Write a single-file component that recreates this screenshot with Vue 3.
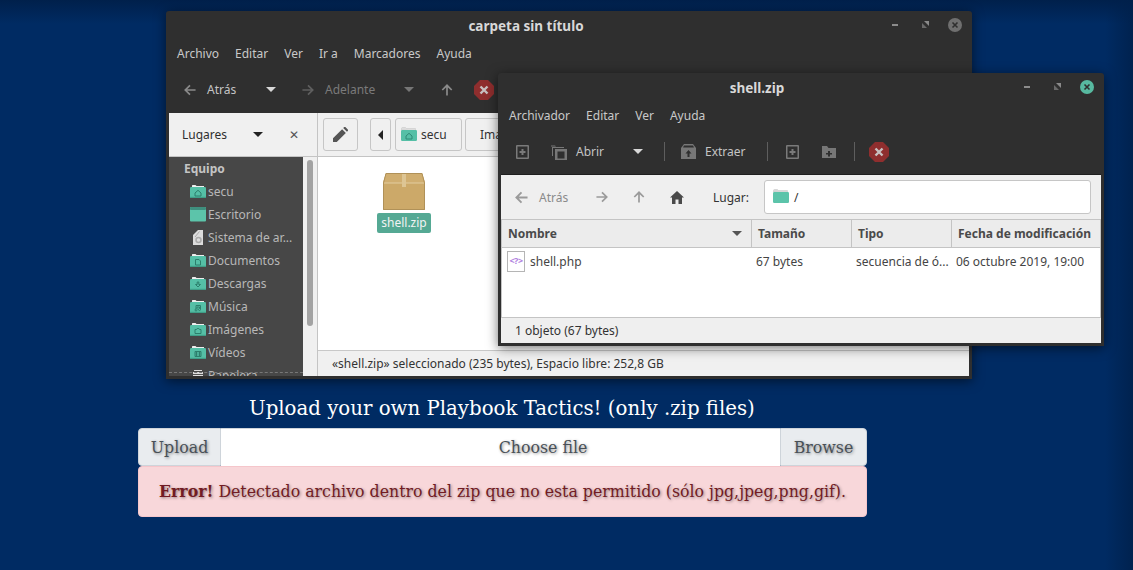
<script setup>
const places = [
  { name: 'secu', glyph: 'M5 9 8 6.300 11 9v3H5z', kind: 'folder' },
  { name: 'Escritorio', kind: 'desk' },
  { name: 'Sistema de ar...', kind: 'disk' },
  { name: 'Documentos', glyph: 'M5.500 6.500h3.500l1.500 1.500v4h-5z', kind: 'folder' },
  { name: 'Descargas', glyph: 'M7.200 6h1.600v2.500h1.700L8 11 5.500 8.500h1.700z', kind: 'folder' },
  { name: 'Música', glyph: 'M6 6.500h4.500v4a1 1 0 1 1-1-1V8H7v3a1 1 0 1 1-1-1z', kind: 'folder' },
  { name: 'Imágenes', glyph: 'M5 7.500h1.500l.7-1h1.600l.7 1H11v4H5z', kind: 'folder' },
  { name: 'Vídeos', glyph: 'M5 6.500h6v5H5zM6 7.500v1h1v-1zm3 0v1h1v-1zm-3 2v1h1v-1zm3 0v1h1v-1z', kind: 'folder' },
  { name: 'Papelera', kind: 'trash' },
]
const menu1 = ['Archivo', 'Editar', 'Ver', 'Ir a', 'Marcadores', 'Ayuda']
const menu2 = ['Archivador', 'Editar', 'Ver', 'Ayuda']
const columns = [
  { name: 'Nombre', width: 250, sort: true },
  { name: 'Tamaño', width: 100 },
  { name: 'Tipo', width: 100 },
  { name: 'Fecha de modificación', width: 148 },
]
</script>

<template>
  <div class="desktop">
    <svg class="defs" width="0" height="0" aria-hidden="true">
      <defs>
        <symbol id="left" viewBox="0 0 14 14"><path d="M7 1.500 1.500 7 7 12.500M1.800 7H13.500" fill="none" stroke="currentColor" stroke-width="2"/></symbol>
        <symbol id="right" viewBox="0 0 14 14"><path d="M7 1.500 12.500 7 7 12.500M12.200 7H.5" fill="none" stroke="currentColor" stroke-width="2"/></symbol>
        <symbol id="up" viewBox="0 0 14 14"><path d="M1.500 7 7 1.500 12.500 7M7 1.800V13.500" fill="none" stroke="currentColor" stroke-width="2"/></symbol>
        <symbol id="stop" viewBox="0 0 20 20"><path d="M6 0h8l6 6v8l-6 6H6l-6-6V6z" fill="#8f2e2e"/><path d="m6.500 6.500 7 7m0-7-7 7" stroke="#c8c0c0" stroke-width="2.400"/></symbol>
        <symbol id="close" viewBox="0 0 14 14"><circle cx="7" cy="7" r="7" fill="currentColor"/><path d="m4.500 4.500 5 5m0-5-5 5" stroke="#2f2f2f" stroke-width="1.600"/></symbol>
        <symbol id="max" viewBox="0 0 7 7"><path d="M2 0h5v5z" fill="#8a8a8a"/><path d="M0 2v5h5z" fill="#6a6a6a"/></symbol>
        <symbol id="addfile" viewBox="0 0 13 14"><path fill-rule="evenodd" d="M1 0h11a1 1 0 0 1 1 1v12a1 1 0 0 1-1 1H1a1 1 0 0 1-1-1V1a1 1 0 0 1 1-1zm.500 1.500v11h10v-11zM5.500 4h2v2h2v2h-2v2h-2V8h-2V6h2z" fill="#7a7a7a"/></symbol>
        <symbol id="addfolder" viewBox="0 0 14 14"><path fill-rule="evenodd" d="M0 1h5l1.500 2H14v10H0zM6 6v2H4v1.500h2v2h2v-2h2V8H8V6z" fill="#777"/></symbol>
        <symbol id="open" viewBox="0 0 16 16"><path d="M1 3h12v1H2v8H1zM0 1.500h4l1 1H0z" fill="#777"/><path fill-rule="evenodd" d="M4 5h12v11H4zm2.500 2.500v7h7v-7z" fill="#777"/></symbol>
        <symbol id="extract" viewBox="0 0 15 15"><path fill-rule="evenodd" d="M3 0h9l3 4v11H0V4zm0 1.500L2 3.500h11l-1-2zM7.500 6 4.500 9.500h2V13h2V9.500h2z" fill="#777"/></symbol>
      </defs>
    </svg>

    <section class="window back">
      <header class="title">carpeta sin título
        <div class="controls">
          <i class="min"></i>
          <svg class="max"><use href="#max"/></svg>
          <svg class="close idle"><use href="#close"/></svg>
        </div>
      </header>
      <nav class="menu"><span v-for="m in menu1" :key="m">{{ m }}</span></nav>
      <div class="tools tools1">
        <svg class="ic a1"><use href="#left"/></svg>
        <span class="t-atras">Atrás</span>
        <i class="caret c1"></i>
        <svg class="ic dim a2"><use href="#right"/></svg>
        <span class="dimtxt t-adel">Adelante</span>
        <i class="caret dimcaret c2"></i>
        <svg class="ic a3"><use href="#up"/></svg>
        <svg class="stop s1"><use href="#stop"/></svg>
      </div>
      <div class="fm">
        <aside class="side">
          <div class="lug">
            <span>Lugares</span>
            <i class="caret blk"></i>
            <span class="x">✕</span>
          </div>
          <div class="side-body">
            <div class="list">
              <div class="eq">Equipo</div>
              <div class="pl" v-for="p in places" :key="p.name">
                <svg class="pic" viewBox="0 0 16 16">
                  <template v-if="p.kind === 'folder'">
                    <path d="M2 3V1.500l.5-.5h3l1 1h7.500v1z" fill="#eee"/>
                    <rect x="0" y="3" width="16" height="11" rx="1.200" fill="#55bfa6"/>
                    <rect x="0" y="12.800" width="16" height="1.200" fill="#3f9e88"/>
                    <path :d="p.glyph" fill="none" stroke="#2c7f6c" stroke-width="1"/>
                  </template>
                  <template v-else-if="p.kind === 'desk'">
                    <rect x="0" y="0" width="16" height="14.500" rx="1" fill="#5cc4aa"/>
                    <rect x="0" y="0" width="16" height="3" rx="1" fill="#3f8f7e"/>
                  </template>
                  <template v-else-if="p.kind === 'disk'">
                    <path d="M8 0h5v15H3V5z" fill="#dcdcdc"/>
                    <circle cx="8.500" cy="10" r="2.500" fill="none" stroke="#aaa" stroke-width="1.500"/>
                    <path d="M5 7 9.500 1.500" stroke="#aaa"/>
                  </template>
                  <template v-else>
                    <path d="M4 2h8v1H4zM3 4h10v8H3z" fill="#ddd"/>
                    <path d="M3 6h10v1H3z" fill="#555"/>
                  </template>
                </svg>
                <span>{{ p.name }}</span>
              </div>
            </div>
            <i class="dash"></i>
            <div class="track"><b></b></div>
          </div>
        </aside>
        <main class="pane">
          <div class="pathbar">
            <button class="pb edit">
              <svg viewBox="0 0 14 14" width="15" height="15"><path d="M0 14v-3.500L8.500 2 12 5.500 3.500 14zM9.500 1 11 -.5 14.500 3 13 4.500z" fill="#555"/></svg>
            </button>
            <button class="pb back-btn"><i class="lt"></i></button>
            <button class="pb crumb">
              <svg class="pic" viewBox="0 0 16 16"><path d="M.5 3V1.500a1 1 0 0 1 1-1h3l1 1h9V4z" fill="#ddd" stroke="#bbb" stroke-width=".4"/><rect x="0" y="3" width="16" height="11" rx="1.200" fill="#55bfa6"/><path d="M5 9 8 6.300 11 9v3H5z" fill="none" stroke="#2f8a76"/></svg>
              secu
            </button>
            <button class="pb crumb2">Imágenes</button>
          </div>
          <div class="files">
            <div class="file">
              <svg width="42" height="37" viewBox="0 0 42 37">
                <path d="M3 0h36l3 10v27H0V10z" fill="#cca969"/>
                <path d="M3 0h36l3 10H0z" fill="#d0ae70"/>
                <path d="M.5 10h41" stroke="#e2cda0"/>
                <path d="M19 0h4v14h-4z" fill="#ddc594"/>
                <path d="M3 .5h36l2.500 9.500v26.500H.5V10z" fill="none" stroke="#b09158"/>
              </svg>
              <span class="sel">shell.zip</span>
            </div>
          </div>
          <footer class="status1">«shell.zip» seleccionado (235 bytes), Espacio libre: 252,8 GB</footer>
        </main>
      </div>
    </section>

    <section class="window front">
      <header class="title">shell.zip
        <div class="controls">
          <i class="min"></i>
          <svg class="max"><use href="#max"/></svg>
          <svg class="close active"><use href="#close"/></svg>
        </div>
      </header>
      <nav class="menu"><span v-for="m in menu2" :key="m">{{ m }}</span></nav>
      <div class="tools tools2">
        <svg class="tic i1"><use href="#addfile"/></svg>
        <svg class="tic i2"><use href="#open"/></svg>
        <span class="t-abrir">Abrir</span>
        <i class="caret c3"></i>
        <i class="sep s-a"></i>
        <svg class="tic i3"><use href="#extract"/></svg>
        <span class="t-ext">Extraer</span>
        <i class="sep s-b"></i>
        <svg class="tic i4"><use href="#addfile"/></svg>
        <svg class="tic i5"><use href="#addfolder"/></svg>
        <i class="sep s-c"></i>
        <svg class="stop s2"><use href="#stop"/></svg>
      </div>
      <div class="navbar">
        <svg class="ic nv n1"><use href="#left"/></svg>
        <span class="nav-atras">Atrás</span>
        <svg class="ic nv n2"><use href="#right"/></svg>
        <svg class="ic nv n3"><use href="#up"/></svg>
        <svg class="home" viewBox="0 0 14 13" width="14" height="13"><path d="M7 0 14 6.500h-2V13H8.500V8.500h-3V13H2V6.500H0z" fill="#4a4a4a"/></svg>
        <span class="lugar">Lugar:</span>
        <div class="loc">
          <svg class="pic" viewBox="0 0 16 16"><path d="M.5 3V1.500a1 1 0 0 1 1-1h3l1 1h9V4z" fill="#d8d8d8" stroke="#bbb" stroke-width=".4"/><rect x="0" y="3" width="16" height="11" rx="1.200" fill="#5cc4aa"/></svg>
          <span>/</span>
        </div>
      </div>
      <div class="cols">
        <div v-for="c in columns" :key="c.name" class="col" :style="{ width: c.width + 'px' }">
          {{ c.name }}<i v-if="c.sort" class="caret sort"></i>
        </div>
      </div>
      <div class="rows">
        <div class="cell" style="width: 249px">
          <span class="php">&lt;?&gt;</span>shell.php
        </div>
        <div class="cell" style="width: 100px">67 bytes</div>
        <div class="cell" style="width: 100px">secuencia de ó...</div>
        <div class="cell" style="width: 148px">06 octubre 2019, 19:00</div>
      </div>
      <footer class="status2">1 objeto (67 bytes)</footer>
    </section>

    <div class="upload">
      <h1>Upload your own Playbook Tactics! (only .zip files)</h1>
      <div class="group">
        <span class="addon left">Upload</span>
        <span class="choose">Choose file</span>
        <span class="addon right">Browse</span>
      </div>
      <div class="alert"><strong>Error!</strong> Detectado archivo dentro del zip que no esta permitido (sólo jpg,jpeg,png,gif).</div>
    </div>
  </div>
</template>

<style>
html, body { margin: 0; background: #002b63; }
</style>

<style scoped>
.desktop {
  position: relative; width: 1133px; height: 570px; overflow: hidden; box-sizing: border-box;
  padding: 396px 266px 0 138px;
  font-family: "Noto Sans", sans-serif; font-size: 12px;
  background:
    linear-gradient(180deg, #00204b 0, rgba(0,32,75,0) 24px),
    linear-gradient(90deg, rgba(0,32,75,0) 1105px, #00224f 1133px),
    #002b63;
}
.defs { position: absolute; }
.window {
  position: absolute; box-sizing: border-box; background: #2f2f2f; border-radius: 3px 3px 0 0;
  padding: 0 3px 3px; color: #d4d4d4; display: flex; flex-direction: column;
  box-shadow: 0 2px 12px rgba(0,0,0,.55);
}
.back { left: 166px; top: 11px; width: 806px; height: 368px; }
.front { left: 498px; top: 73px; width: 606px; height: 273px; }
.title { position: relative; height: 30px; line-height: 30px; box-sizing: border-box; text-align: center; font-weight: 700; font-size: 13.5px; color: #d8d8d8; flex: none; }
.back .title { padding-right: 86px; }
.front .title { padding-right: 88px; }
.controls { position: absolute; right: 7px; top: 7px; width: 74px; height: 14px; }
.min { position: absolute; left: 4px; top: 6px; width: 6px; height: 2px; background: #8c8c8c; }
.max { position: absolute; left: 34px; top: 3px; width: 7px; height: 7px; }
.close { position: absolute; left: 60px; top: 0; width: 14px; height: 14px; }
.idle { color: #6f6f6f; }
.active { color: #57b9a0; }
.menu { display: flex; gap: 16px; height: 25px; line-height: 25px; padding-left: 8px; flex: none; color: #c9c9c9; }
.tools { position: relative; display: flex; align-items: center; flex: none; color: #c4c4c4; height: 47px; }
.tools2 { border-bottom: 1px solid #1f1f1f; box-sizing: border-box; padding-top: 1px; }
.ic { width: 12px; height: 12px; color: #8a8a8a; flex: none; }
.dim { color: #5f5f5f; }
.caret { width: 0; height: 0; flex: none; border-left: 5px solid transparent; border-right: 5px solid transparent; border-top: 5px solid #d8d8d8; }
.dimcaret { border-top-color: #767676; }
.dimtxt { color: #7a7a7a; }
.blk { border-top-color: #222; }
.a1 { margin-left: 15px; }
.t-atras { margin-left: 11px; width: 30px; }
.c1 { margin-left: 29px; }
.a2 { margin-left: 26px; }
.t-adel { margin-left: 11px; width: 50px; }
.c2 { margin-left: 29px; }
.a3 { margin-left: 27px; }
.stop { width: 20px; height: 20px; flex: none; }
.s1 { margin-left: 21px; }
.fm { flex: 1; display: flex; background: #f0f0f0; color: #333; min-height: 0; }
.side { width: 149px; flex: none; display: flex; flex-direction: column; border-right: 1px solid #c4c4c4; box-sizing: border-box; }
.lug { height: 44px; box-sizing: border-box; display: flex; align-items: center; padding: 0 0 1px 13px; border-bottom: 1px solid #c4c4c4; color: #2e2e2e; flex: none; }
.lug span:first-child { width: 71px; }
.x { margin-left: 26px; color: #555; font-size: 12px; }
.side-body { flex: 1; display: flex; min-height: 0; position: relative; }
.list { width: 134px; background: #474747; color: #bdbdbd; overflow: hidden; flex: none; }
.dash { position: absolute; left: 0; width: 134px; bottom: 3px; height: 0; border-top: 1px dashed #777; }
.eq { height: 23px; line-height: 23px; font-weight: 700; padding-left: 15px; color: #c4c4c4; }
.pl { height: 23px; display: flex; align-items: center; gap: 2px; padding-left: 21px; color: #b8b8b8; }
.pic { width: 16px; height: 16px; flex: none; }
.track { flex: 1; background: #f0f0f0; position: relative; }
.track b { display: block; width: 6px; height: 166px; margin: 3px 0 0 4px; background: #a3a3a3; border-radius: 3px; }
.pane { flex: 1; display: flex; flex-direction: column; min-width: 0; }
.pathbar { height: 44px; box-sizing: border-box; border-bottom: 1px solid #c4c4c4; display: flex; align-items: center; padding-left: 5px; flex: none; }
.pb { height: 33px; box-sizing: border-box; border: 1px solid #c6c6c6; border-radius: 3px; background: #f0f0f0; font: inherit; color: #333; padding: 0; display: flex; align-items: center; justify-content: center; }
.edit { width: 35px; margin-right: 12px; }
.back-btn { width: 21px; margin-right: 4px; }
.lt { width: 0; height: 0; border-top: 5px solid transparent; border-bottom: 5px solid transparent; border-right: 5px solid #222; }
.crumb { width: 67px; gap: 4px; margin-right: 3px; justify-content: flex-start; padding-left: 5px; }
.crumb2 { width: 90px; justify-content: flex-start; padding-left: 14px; }
.files { flex: 1; background: #fff; padding: 16px 0 0 46px; }
.file { width: 80px; display: flex; flex-direction: column; align-items: center; gap: 3px; }
.sel { background: #55a994; color: #f3f3f3; border-radius: 2px; padding: 0 4px; height: 20px; line-height: 19px; }
.status1 { height: 26px; line-height: 26px; padding-left: 14px; border-top: 1px solid #c8c8c8; flex: none; box-sizing: border-box; color: #333; }

.tic { flex: none; }
.i1 { width: 13px; height: 14px; margin-left: 15px; }
.i2 { width: 16px; height: 16px; margin-left: 22px; }
.t-abrir { margin-left: 9px; width: 30px; }
.c3 { margin-left: 27px; }
.sep { width: 1px; height: 19px; background: #5e5e5e; flex: none; }
.s-a { margin-left: 21px; }
.i3 { width: 15px; height: 15px; margin-left: 16px; }
.t-ext { margin-left: 9px; width: 42px; }
.s-b { margin-left: 20px; }
.i4 { width: 13px; height: 14px; margin-left: 18px; }
.i5 { width: 14px; height: 14px; margin-left: 23px; }
.s-c { margin-left: 18px; }
.s2 { margin-left: 14px; }

.navbar { height: 44px; background: #efefef; display: flex; align-items: center; color: #333; flex: none; }
.nv { color: #9a9a9a; }
.n1 { margin-left: 14px; width: 13px; height: 13px; }
.nav-atras { margin-left: 11px; width: 30px; color: #8a8a8a; }
.n2 { margin-left: 27px; }
.n3 { margin-left: 25px; }
.home { margin-left: 25px; flex: none; }
.lugar { margin-left: 29px; width: 35px; }
.loc { margin-left: 16px; width: 327px; height: 34px; box-sizing: border-box; background: #fff; border: 1px solid #c6c6c6; border-radius: 3px; display: flex; align-items: center; padding-left: 8px; gap: 5px; }
.cols { display: flex; height: 29px; flex: none; color: #4a4a4a; background: #ececec; border: 1px solid #c4c4c4; box-sizing: border-box; }
.col { box-sizing: border-box; padding-left: 6px; line-height: 27px; font-weight: 700; border-right: 1px solid #c4c4c4; position: relative; flex: none; }
.col:last-child { border-right: 0; }
.sort { position: absolute; right: 9px; top: 11px; border-top-color: #555; }
.rows { flex: 1; background: #fff; display: flex; color: #444; padding-top: 2px; box-sizing: border-box; border-left: 1px solid #c4c4c4; border-right: 1px solid #c4c4c4; }
.cell { box-sizing: border-box; padding-left: 5px; height: 24px; line-height: 24px; display: flex; flex: none; white-space: nowrap; }
.php { width: 18px; height: 21px; margin: 1px 5px 0 0; flex: none; box-sizing: border-box; border: 1px solid #b5b5b5; font-size: 9px; line-height: 18px; text-align: center; color: #b07fe0; font-weight: 700; letter-spacing: -.5px; }
.status2 { height: 26px; line-height: 26px; background: #efefef; border-top: 1px solid #c4c4c4; padding-left: 14px; color: #333; flex: none; box-sizing: border-box; }

.upload { position: relative; font-family: "DejaVu Serif", serif; width: 729px; }
h1 { margin: 0; height: 32px; line-height: 26px; font-size: 19.75px; font-weight: 400; color: #fff; text-align: left; padding-left: 111px; white-space: nowrap; }
.group { display: flex; height: 38px; }
.addon, .choose { font-size: 15.8px; text-shadow: 1px 1px 3px rgba(0,0,0,.45); color: #495057; box-sizing: border-box; }
.addon { background: #e9ecef; border: 1px solid #ced4da; line-height: 37px; text-align: center; flex: none; }
.left { width: 83px; border-radius: 4px 0 0 4px; }
.right { width: 87px; border-radius: 0 4px 4px 0; }
.choose { flex: 1; background: #fff; border-top: 1px solid #ced4da; text-align: center; line-height: 37px; padding-left: 85px; }
.alert { height: 51px; box-sizing: border-box; background: #f8d7da; border: 1px solid #f5c6cb; border-radius: 4px; color: #721c24; font-size: 15.78px; line-height: 49px; padding-left: 20px; text-shadow: 1px 1px 3px rgba(0,0,0,.4); white-space: nowrap; }
</style>
